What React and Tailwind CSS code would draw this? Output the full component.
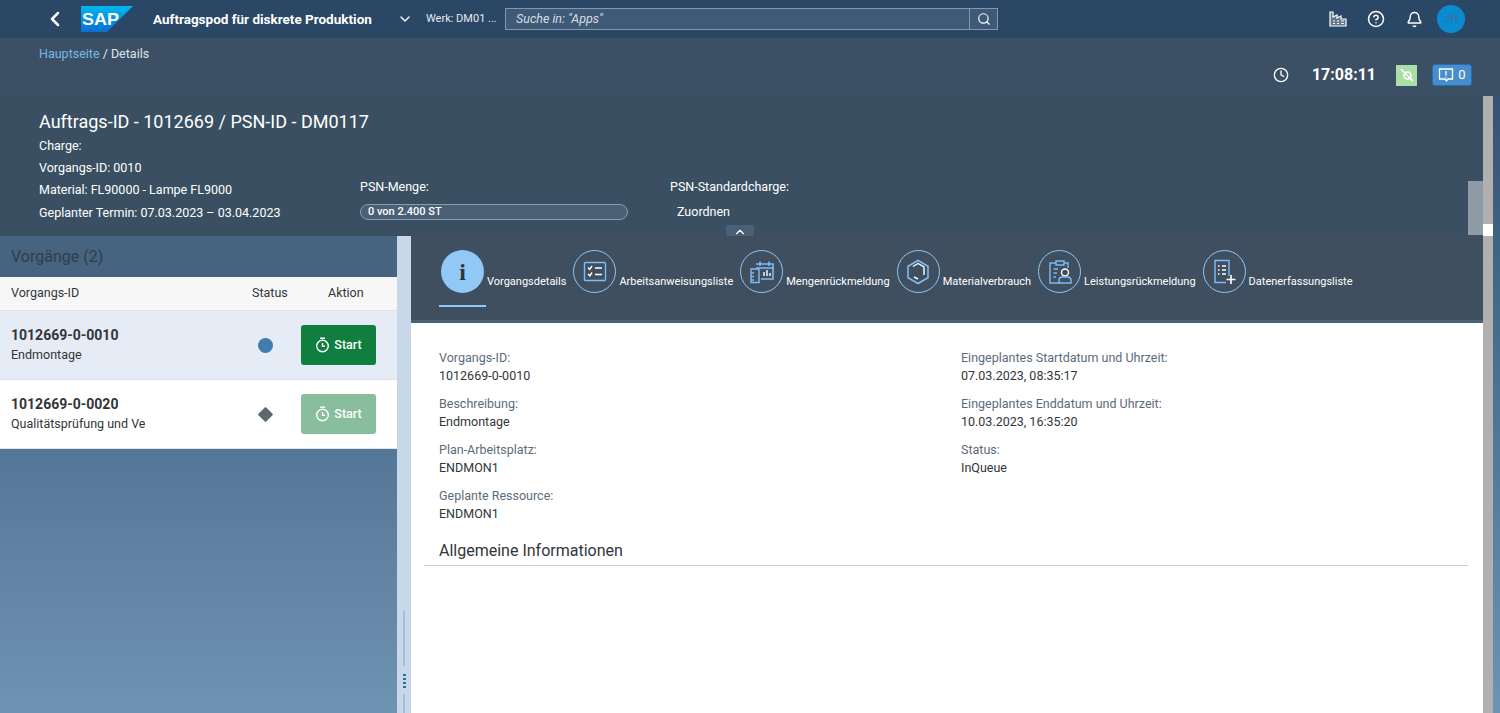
import { ChevronLeft, ChevronDown, ChevronUp, Search, CircleHelp, Bell, Clock } from "lucide-react"

const font = "font-['Roboto',sans-serif]"

function SapLogo() {
  return (
    <svg width="52" height="26" viewBox="0 0 52 26">
      <defs>
        <linearGradient id="sapBlue" x1="0" y1="0" x2="0" y2="1">
          <stop offset="0" stopColor="#00b8f1" />
          <stop offset="1" stopColor="#0a6ed1" />
        </linearGradient>
      </defs>
      <path d="M0 0H52L26 26H0Z" fill="url(#sapBlue)" />
      <text x="1" y="18.5" fill="#fff" fontSize="17" fontWeight="700" fontFamily="Liberation Sans" textLength="37" lengthAdjust="spacingAndGlyphs">SAP</text>
    </svg>
  )
}

function PlantIcon() {
  return (
    <svg width="18" height="16" viewBox="0 0 18 16" fill="none" stroke="#fff" strokeWidth="1.2">
      <path d="M1 15V1h3v5l4-2v3l4-2v3h5v7Z" fill="#fff" fillOpacity=".25" />
      <path d="M4 10h2M8 10h2M12 10h3M4 12.500h2M8 12.500h2M12 12.500h3" />
    </svg>
  )
}

function TabIcon({ name }) {
  const p = { width: 28, height: 28, viewBox: "0 0 28 28", fill: "none", stroke: "#7ebcf5", strokeWidth: 1.4 }
  if (name === "list") return (
    <svg {...p}>
      <rect x="3.500" y="4.500" width="21" height="18" rx="1" />
      <path d="M7 9.500l1.800 1.800L11 8M7 16l1.800 1.800L11 14.500M14 10h7M14 16.500h7" stroke="#fff" />
    </svg>
  )
  if (name === "qty") return (
    <svg {...p}>
      <path d="M8 6h17v15H13M12 3.500V8M21 3.500V8M8 10h17" strokeWidth="1.600" />
      <path d="M16 18v-4M19 18v-6M22 18v-3" stroke="#fff" />
      <path d="M3 11h8v13.500H3ZM3 15h3M3 18.500h3M3 22h3" />
    </svg>
  )
  if (name === "box") return (
    <svg {...p}>
      <path d="M14 2.500l10 5.700v11.600l-10 5.700-10-5.700V8.200Z" strokeWidth="1.600" />
      <path d="M9 8.500l5-3 6 3.500v8" stroke="#fff" />
      <path d="M10 19l4 2" stroke="#fff" />
    </svg>
  )
  if (name === "person") return (
    <svg {...p}>
      <path d="M10 5H4v20h9M18 5h4v5" />
      <path d="M10 3h8v4h-8Z" />
      <path d="M7.500 11H12M7.500 15H11M7.500 19H10" />
      <circle cx="19" cy="14.500" r="3.500" stroke="#fff" />
      <path d="M13 25v-2.500c0-2 1.500-3.500 3.500-3.500h5c2 0 3.500 1.500 3.500 3.500V25Z" />
    </svg>
  )
  return (
    <svg {...p}>
      <path d="M19 18V2.500H5v22h11" />
      <path d="M8 8h1.500M12 8h4M8 12h1.500M12 12h4M8 16h1.500M12 16h4" stroke="#fff" />
      <path d="M21 17v9M16.500 21.500h9" stroke="#fff" strokeWidth="1.600" />
    </svg>
  )
}

const tabs = [
  ["Arbeitsanweisungsliste", "list"],
  ["Mengenrückmeldung", "qty"],
  ["Materialverbrauch", "box"],
  ["Leistungsrückmeldung", "person"],
  ["Datenerfassungsliste", "add"],
]

function StopWatch() {
  return (
    <svg width="15" height="16" viewBox="0 0 15 16" fill="none" stroke="currentColor" strokeWidth="1.400">
      <circle cx="7.500" cy="9" r="5.800" />
      <path d="M5 1.200h5M7.500 6v3.200h2.500" />
    </svg>
  )
}

function Row({ id, name, active, children }) {
  return (
    <div className={`h-[69px] flex items-center border-b border-[#dde3ea] ${active ? "bg-[#e5ecf5]" : "bg-white"}`}>
      <div className="w-[240px] pl-[11px]">
        <p className="text-[14px] leading-[19px] font-bold text-[#32363a]">{id}</p>
        <p className="mt-[1px] w-[134px] overflow-hidden whitespace-nowrap text-[12.5px] leading-[18px] text-[#32363a]">{name}</p>
      </div>
      <div className="w-[50px] flex justify-center">{children}</div>
      <button className={`ml-[11px] w-[75px] h-[40px] flex items-center justify-center gap-[4px] rounded-[3px] text-[12.5px] font-medium text-white ${active ? "bg-[#107e3e]" : "bg-[#88bd9e]"}`}>
        <StopWatch />
        Start
      </button>
    </div>
  )
}

function Field({ label, value }) {
  return (
    <div className="h-[46px] text-[12.5px] leading-[18px]">
      <p className="text-[#5b6b7c]">{label}</p>
      <p className="text-[#32363a]">{value}</p>
    </div>
  )
}

export default function App() {
  return (
    <div className={`${font} w-[1500px] h-[713px] overflow-hidden flex flex-col bg-gradient-to-b from-[#2c4a69] to-[#6f93b3]`}>
      <header className="h-[38px] shrink-0 flex items-center bg-[#2a4765] text-white">
        <ChevronLeft size={24} strokeWidth={2.500} className="ml-[43px]" />
        <div className="ml-[14px]"><SapLogo /></div>
        <span className="ml-[20px] w-[240px] text-[13.5px] font-bold whitespace-nowrap">Auftragspod für diskrete Produktion</span>
        <ChevronDown size={16} className="ml-[4px]" />
        <span className="ml-[13px] w-[75px] text-[11px] text-[#e4e9ee] whitespace-nowrap">Werk: DM01 ...</span>
        <div className="ml-[4px] w-[493px] h-[22px] flex items-center justify-between border border-[#8696a6] bg-[#3f5a76]">
          <span className="ml-[10px] text-[12.5px] italic text-[#d5dce3]">Suche in: "Apps"</span>
          <span className="w-[28px] h-full flex items-center justify-center border-l border-[#8696a6]"><Search size={14} /></span>
        </div>
        <div className="ml-auto flex items-center">
          <PlantIcon />
          <CircleHelp size={18} className="ml-[20px]" />
          <Bell size={17} className="ml-[21px]" />
          <div className="ml-[14px] mr-[35px] w-[28px] h-[28px] rounded-full bg-[#0a8bd0] flex items-center justify-center text-[11px] text-[#3b6f98]">JH</div>
        </div>
      </header>

      <div className="h-[58px] shrink-0 bg-[#3c5065] relative">
        <p className="pl-[39px] pt-[7px] text-[12.5px] leading-[18px] text-[#dfe4e9]"><span className="text-[#74b9ec]">Hauptseite</span> / Details</p>
        <div className="absolute right-[28px] top-[25px] flex items-center text-white">
          <Clock size={16} />
          <span className="ml-[23px] text-[16px] font-bold">17:08:11</span>
          <span className="ml-[20px] w-[21px] h-[21px] bg-[#abdfa6] flex items-center justify-center">
            <svg width="16" height="16" viewBox="0 0 16 16" fill="none" stroke="#fff" strokeWidth="1.500">
              <circle cx="8.500" cy="8.500" r="3.500" />
              <path d="M2 2l12 12" />
            </svg>
          </span>
          <span className="ml-[15px] w-[40px] h-[22px] flex items-center justify-center gap-[4px] rounded-[3px] border border-[#1d6fb8] bg-[#4a8dcc] text-[13px]">
            <svg width="16" height="16" viewBox="0 0 16 16" fill="none" stroke="#fff" strokeWidth="1.300">
              <path d="M1.500 2h13v10H10l-1.500 2-1.500-2H1.500Z" />
              <path d="M8 4v4.500M8 9.700v1" />
            </svg>
            0
          </span>
        </div>
      </div>

      <div className="flex-1 min-h-0 flex">
        <div className="w-[1483px] flex flex-col">
          <div className="h-[140px] shrink-0 bg-[#3a5062] flex text-white relative">
            <div className="w-[360px] pl-[39px] pt-[14px] text-[12.5px] leading-[22px]">
              <h1 className="text-[18px] leading-[24px] font-normal whitespace-nowrap">Auftrags-ID - 1012669 / PSN-ID - DM0117</h1>
              <p className="mt-[1px]">Charge:</p>
              <p>Vorgangs-ID: 0010</p>
              <p>Material: FL90000 - Lampe FL9000</p>
              <p className="mt-[1px]">Geplanter Termin: 07.03.2023 – 03.04.2023</p>
            </div>
            <div className="w-[310px] pt-[80px] text-[12.5px] leading-[22px]">
              <p>PSN-Menge:</p>
              <div className="mt-[6px] w-[268px] h-[16px] rounded-full border border-[#8b9dac] bg-[#4a6076] pl-[7px] text-[11px] leading-[14px] font-medium">0 von 2.400 ST</div>
            </div>
            <div className="pt-[80px] text-[12.5px] leading-[22px]">
              <p>PSN-Standardcharge:</p>
              <p className="mt-[3px] ml-[7px]">Zuordnen</p>
            </div>
            <div className="absolute left-[726px] bottom-0 w-[28px] h-[11px] overflow-hidden bg-[#4a6076] rounded-t-[2px] flex justify-center"><ChevronUp size={14} /></div>
            <div className="ml-auto mt-[85px] w-[15px] h-[54px] bg-[#8f9ca6]"></div>
          </div>

          <div className="flex-1 min-h-0 flex">
            <div className="w-[397px] shrink-0">
              <div className="h-[41px] flex items-center pl-[11px] text-[16px] text-[#2f3e4d] bg-[#46637f]">Vorgänge (2)</div>
              <div className="h-[34px] flex items-center bg-[#f7f7f7] border-b border-[#e0e3e6] text-[12.5px] text-[#32363a]">
                <span className="w-[240px] pl-[11px]">Vorgangs-ID</span>
                <span className="w-[58px] pl-[12px]">Status</span>
                <span className="pl-[30px]">Aktion</span>
              </div>
              <Row id="1012669-0-0010" name="Endmontage" active>
                <span className="w-[15px] h-[15px] rounded-full bg-[#427cac]"></span>
              </Row>
              <Row id="1012669-0-0020" name="Qualitätsprüfung und Verpackung">
                <span className="w-[11px] h-[11px] rotate-45 rounded-[1px] bg-[#5e696e]"></span>
              </Row>
            </div>

            <div className="w-[14px] shrink-0 bg-[#c8d8e8] flex flex-col items-center justify-end">
              <span className="w-[2px] h-[55px] bg-[#a3bfd9]"></span>
              <span className="mt-[8px] w-[3px] h-[2px] bg-[#2f6fa8]"></span>
              <span className="mt-[2px] w-[3px] h-[2px] bg-[#2f6fa8]"></span>
              <span className="mt-[2px] w-[3px] h-[2px] bg-[#2f6fa8]"></span>
              <span className="mt-[2px] w-[3px] h-[2px] bg-[#2f6fa8]"></span>
              <span className="mt-[6px] w-[2px] h-[19px] bg-[#a3bfd9]"></span>
            </div>

            <div className="flex-1 min-w-0 bg-white flex flex-col">
              <nav className="h-[87px] shrink-0 bg-[#3f4f60] border-b-[3px] border-[#4a6279] flex items-start pl-[30px] pt-[14px] text-white">
                <div className="relative flex gap-[3px] h-[56px]">
                  <span className="w-[43px] h-[43px] rounded-full bg-[#91c8f6] flex items-center justify-center text-[#32363a] text-[24px] font-bold font-['Liberation_Serif',serif]">i</span>
                  <span className="mt-[25px] text-[11px] leading-[14px] whitespace-nowrap">Vorgangsdetails</span>
                  <span className="absolute left-[-2px] w-[47px] top-[55px] h-[2px] bg-[#91c8f6]"></span>
                </div>
                {tabs.map(([label, icon]) => (
                  <div key={label} className="flex gap-[3px] ml-[7px]">
                    <span className="w-[43px] h-[43px] rounded-full border border-[#91c8f6] flex items-center justify-center"><TabIcon name={icon} /></span>
                    <span className="mt-[25px] text-[11px] leading-[14px] whitespace-nowrap">{label}</span>
                  </div>
                ))}
              </nav>
              <div className="pl-[28px] pt-[26px] grid grid-cols-[522px_1fr]">
                <div>
                  <Field label="Vorgangs-ID:" value="1012669-0-0010" />
                  <Field label="Beschreibung:" value="Endmontage" />
                  <Field label="Plan-Arbeitsplatz:" value="ENDMON1" />
                  <Field label="Geplante Ressource:" value="ENDMON1" />
                </div>
                <div>
                  <Field label="Eingeplantes Startdatum und Uhrzeit:" value="07.03.2023, 08:35:17" />
                  <Field label="Eingeplantes Enddatum und Uhrzeit:" value="10.03.2023, 16:35:20" />
                  <Field label="Status:" value="InQueue" />
                </div>
              </div>
              <div className="ml-[13px] mr-[15px] mt-[7px] h-[26px] border-b border-[#c8cdd2] pl-[15px] text-[16px] leading-[22px] text-[#32363a]">Allgemeine Informationen</div>
            </div>
          </div>
        </div>
        <div className="w-[10px] shrink-0 bg-[#b0b0b0] flex flex-col">
          <div className="h-[128px]"></div>
          <div className="h-[12px] bg-white"></div>
        </div>
      </div>
    </div>
  )
}
